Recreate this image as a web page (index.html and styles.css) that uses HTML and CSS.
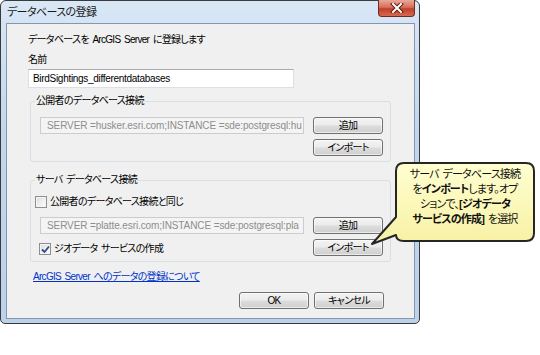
FILE: index.html
```html
<!DOCTYPE html>
<html lang="ja">
<head>
    <meta charset="UTF-8">
    <title>データベースの登録</title>
    <link rel="stylesheet" href="styles.css">
</head>
<body>
    <div class="window">
        <div class="titlebar">
            <span class="title">データベースの登録</span>
            <span class="close">
                <svg width="14" height="10" viewBox="0 0 14 10">
                    <path d="M3 1 L11 9 M11 1 L3 9" stroke="#5a1d12" stroke-width="4" stroke-linecap="square"/>
                    <path d="M3 1 L11 9 M11 1 L3 9" stroke="#ffffff" stroke-width="2" stroke-linecap="square"/>
                </svg>
            </span>
        </div>
        <div class="client">
            <div class="intro">データベースを ArcGIS Server に登録します</div>
            <div class="label">名前</div>
            <div class="textbox">BirdSightings_differentdatabases</div>

            <fieldset class="group group-pub">
                <legend>公開者のデータベース接続</legend>
                <div class="group-grid">
                    <div class="field">SERVER =husker.esri.com;INSTANCE =sde:postgresql:hu</div>
                    <span class="btn">追加</span>
                    <span></span>
                    <span class="btn">インポート</span>
                </div>
            </fieldset>

            <fieldset class="group group-srv">
                <legend>サーバ データベース接続</legend>
                <div class="group-grid">
                    <div class="check-row first"><span class="check"></span>公開者のデータベース接続と同じ</div>
                    <span></span>
                    <div class="field">SERVER =platte.esri.com;INSTANCE =sde:postgresql:pla</div>
                    <span class="btn">追加</span>
                    <div class="check-row second">
                        <span class="check checked">
                            <svg width="9" height="9" viewBox="0 0 9 9"><path d="M1 4.5 L3.5 7 L8 1.5" fill="none" stroke="#2f4a8a" stroke-width="1.8"/></svg>
                        </span>ジオデータ サービスの作成
                    </div>
                    <span class="btn">インポート</span>
                </div>
            </fieldset>

            <a class="help-link" href="#">ArcGIS Server へのデータの登録について</a>

            <div class="footer">
                <span class="btn">OK</span>
                <span class="btn">キャンセル</span>
            </div>
        </div>
    </div>

    <div class="callout">
        <svg class="bubble" width="175" height="92" viewBox="0 0 175 92">
            <defs>
                <linearGradient id="tip" x1="0" y1="0" x2="0" y2="1">
                    <stop offset="0" stop-color="#ffffd0"/>
                    <stop offset="1" stop-color="#f7f1a4"/>
                </linearGradient>
            </defs>
            <path d="M39 4 H161 Q169 4 169 12 V74 Q169 82 161 82 H39 Q31 82 31 76 L7 85 L31 58 V12 Q31 4 39 4 Z"
                  fill="url(#tip)" stroke="#262626" stroke-width="2" stroke-linejoin="round"/>
        </svg>
        <div class="callout-text">
            サーバ データベース接続<br>
            を<b>インポート</b>します。オプ<br>
            ションで、<b>[ジオデータ</b><br>
            <b>サービスの作成]</b> を選択
        </div>
    </div>
</body>
</html>
```

FILE: styles.css
```css
*{
    margin: 0;
    padding: 0;
    box-sizing: border-box;
}
body{
    width: 540px;
    height: 355px;
    background: #ffffff;
    font-family: "Liberation Sans", "Noto Sans CJK JP", sans-serif;
    font-size: 10px;
    letter-spacing: -0.7px;
    word-spacing: 1.5px;
    font-feature-settings: "palt";
    color: #000000;
    position: relative;
    overflow: hidden;
}
.window{
    width: 420px;
    height: 324px;
    border: 1px solid #3a3a3a;
    border-radius: 6px 6px 5px 5px;
    background: linear-gradient(#d9e7f6, #c2d7ee 40%, #bcd2ea);
    padding: 0 4px 4px 5px;
    display: flex;
    flex-direction: column;
}
.titlebar{
    height: 22px;
    display: flex;
    justify-content: space-between;
    align-items: flex-start;
}
.title{
    padding-left: 1px;
    line-height: 22px;
    font-size: 11px;
    letter-spacing: -0.6px;
    color: #1a1a1a;
}
.close{
    width: 37px;
    height: 17px;
    margin-top: -1px;
    border: 1px solid #6e2b20;
    border-top: none;
    border-radius: 0 0 4px 4px;
    background: linear-gradient(#e9a898, #d7705d 45%, #c13f2a 55%, #d8684f);
    display: flex;
    align-items: center;
    justify-content: center;
}
.client{
    flex: 1;
    background: #f0f0f0;
    border: 1px solid #8497ad;
    display: flex;
    flex-direction: column;
}
.intro{
    margin: 8px 0 0 21px;
    line-height: 16px;
}
.label{
    margin: 4px 0 0 21px;
    line-height: 16px;
}
.textbox{
    margin: 1px 0 0 21px;
    width: 266px;
    height: 19px;
    line-height: 17px;
    padding-left: 4px;
    background: #ffffff;
    border: 1px solid #dbdfe6;
    border-top-color: #abadb3;
    letter-spacing: -0.3px;
}
.group{
    margin: 5px 23px 0 23px;
    border: 1px solid #d5dfe5;
    border-radius: 3px;
    padding: 8px 6px 5px 9px;
}
.group legend{
    margin-left: -5px;
    padding: 0 1px;
    line-height: 16px;
}
.group-srv{
    margin-top: 10px;
    padding-top: 7px;
}
.group-grid{
    display: grid;
    grid-template-columns: 264px 70px;
    column-gap: 9px;
    row-gap: 5px;
    align-items: center;
}
.field{
    height: 17px;
    line-height: 15px;
    padding-left: 6px;
    border: 1px solid #c9cdd2;
    background: #f4f4f4;
    color: #8d8d8d;
    white-space: nowrap;
    overflow: hidden;
    letter-spacing: -0.1px;
    word-spacing: 0;
}
.btn{
    display: block;
    height: 17px;
    width: 70px;
    line-height: 15px;
    text-align: center;
    border: 1px solid #707070;
    border-radius: 3px;
    background: linear-gradient(#f3f3f3, #ebebeb 49%, #dddddd 51%, #cfcfcf);
    box-shadow: inset 0 0 0 1px rgba(255, 255, 255, 0.6);
    color: #000000;
}
.check-row{
    display: flex;
    align-items: center;
    line-height: 14px;
}
.check-row.first{
    margin-left: -5px;
    margin-bottom: 3px;
}
.check-row.second{
    margin-left: -1px;
    margin-top: 3px;
}
.check{
    width: 12px;
    height: 12px;
    margin-right: 3px;
    border: 1px solid #8f8f8f;
    background: linear-gradient(135deg, #dcdcdc, #ffffff);
    box-shadow: inset 0 0 0 1px #f4f4f4;
    display: flex;
    align-items: center;
    justify-content: center;
}
.help-link{
    margin: 7px 0 0 26px;
    line-height: 16px;
    color: #0033cc;
    text-decoration: underline;
    align-self: flex-start;
}
.footer{
    display: flex;
    justify-content: flex-end;
    gap: 5px;
    margin: 7px 30px 0 0;
}
.callout{
    position: absolute;
    left: 365px;
    top: 159px;
    width: 175px;
    height: 92px;
}
.bubble{
    position: absolute;
    left: 0;
    top: 0;
}
.callout-text{
    position: absolute;
    left: 31px;
    top: 8px;
    width: 138px;
    text-align: center;
    font-size: 11px;
    letter-spacing: -0.8px;
    line-height: 15px;
    color: #111111;
}
.callout-text b{
    font-weight: bold;
}
```
